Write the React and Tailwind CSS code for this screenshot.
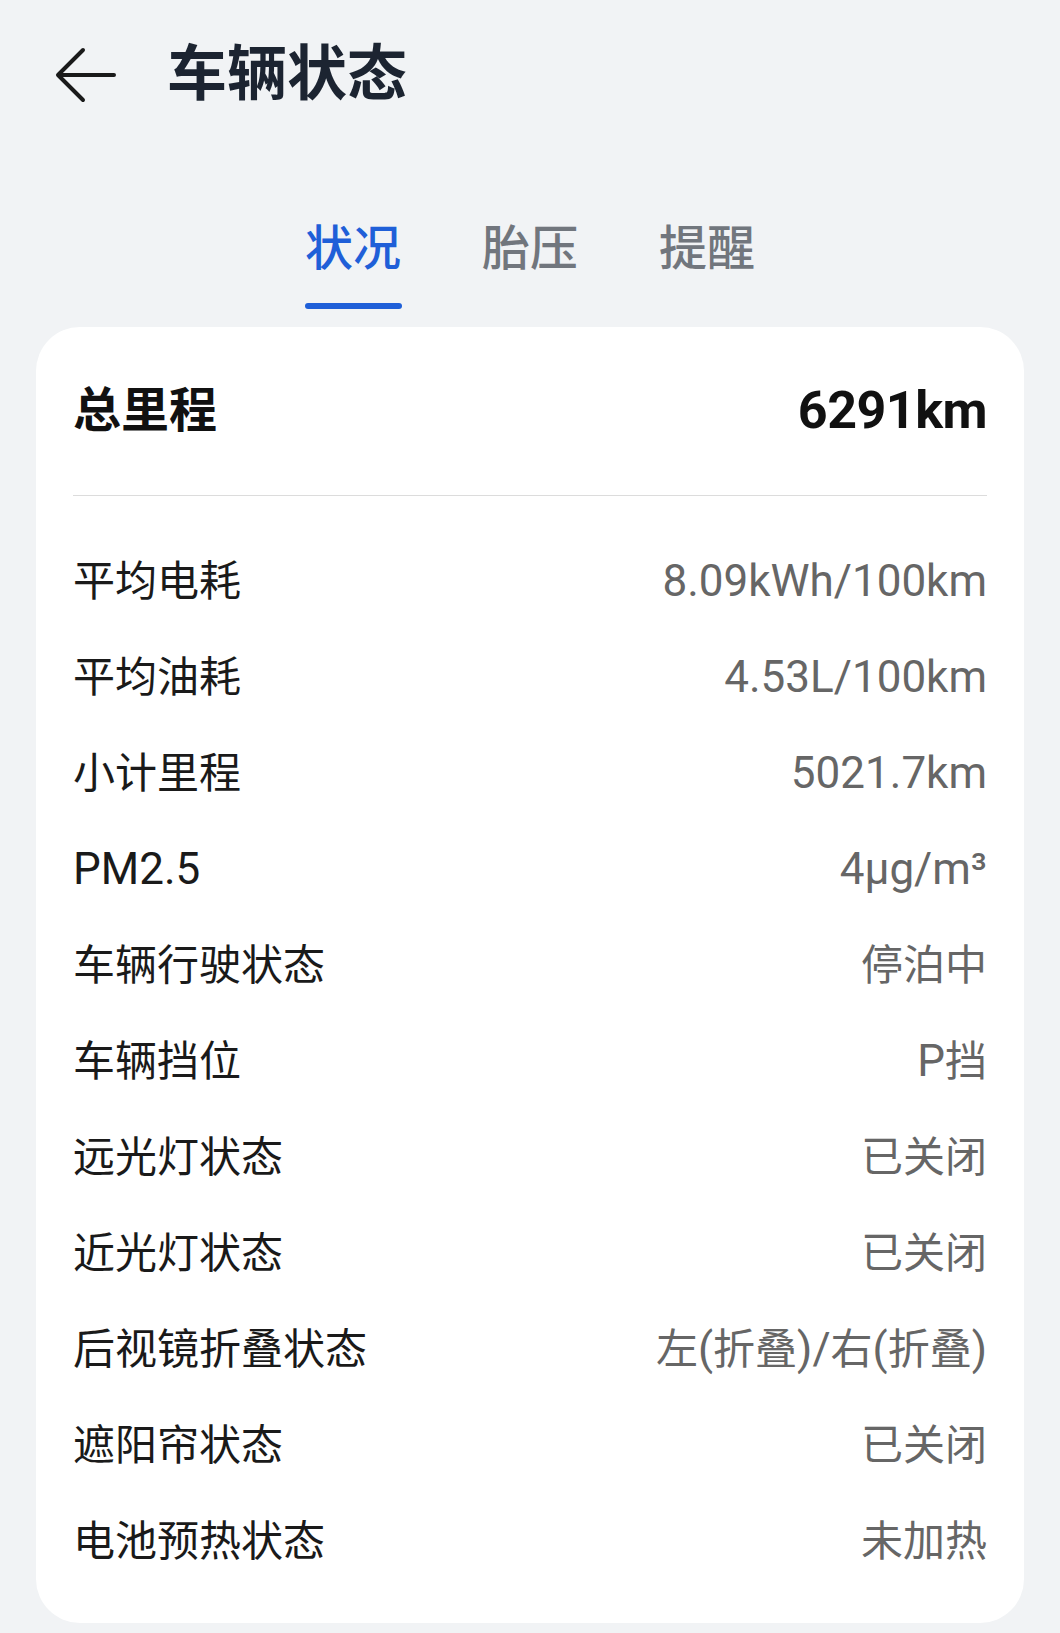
import React from "react";

const rows = [
    { label: "平均电耗", value: "8.09kWh/100km" },
    { label: "平均油耗", value: "4.53L/100km" },
    { label: "小计里程", value: "5021.7km" },
    { label: "PM2.5", value: "4µg/m³" },
    { label: "车辆行驶状态", value: "停泊中" },
    { label: "车辆挡位", value: "P挡" },
    { label: "远光灯状态", value: "已关闭" },
    { label: "近光灯状态", value: "已关闭" },
    { label: "后视镜折叠状态", value: "左(折叠)/右(折叠)" },
    { label: "遮阳帘状态", value: "已关闭" },
    { label: "电池预热状态", value: "未加热" },
];

const tabs = [
    { label: "状况", active: true },
    { label: "胎压", active: false },
    { label: "提醒", active: false },
];

// CJK glyphs run a touch smaller than the latin digits in this UI
const Mixed = ({ text }) =>
    text.split(/([\u4e00-\u9fff]+)/).map((part, i) =>
        /[\u4e00-\u9fff]/.test(part) ? (
            <span key={i} className="text-[42px]">
                {part}
            </span>
        ) : (
            <span key={i}>{part}</span>
        )
    );

const BackArrow = () => (
    <svg width="62" height="58" viewBox="0 0 62 58" fill="none">
        <path
            d="M59 29H4M28 4L3 29l25 25"
            stroke="#1a1a1a"
            strokeWidth="4"
            strokeLinecap="round"
            strokeLinejoin="round"
        />
    </svg>
);

export default function App() {
    return (
        <div className="w-[1060px] h-[1633px] bg-[#f1f3f5] font-['Roboto','Noto_Sans_CJK_SC',sans-serif] overflow-hidden">
            {/* Header */}
            <div className="h-[150px] flex items-center pl-[55px]">
                <BackArrow />
                <h1 className="ml-[50px] text-[60px] leading-none font-bold text-[#1c2431]">
                    车辆状态
                </h1>
            </div>

            {/* Tabs */}
            <div className="pt-[67px] mb-[18px] flex justify-center gap-[81px]">
                {tabs.map((tab) => (
                    <div key={tab.label} className="flex flex-col items-center w-[96px]">
                        <span
                            className={`text-[48px] leading-[64px] font-medium whitespace-nowrap ${tab.active ? "text-[#1f5fd8]" : "text-[#71767d]"
                                }`}
                        >
                            {tab.label}
                        </span>
                        <div
                            className={`mt-[22px] h-[6px] w-[97px] rounded-full ${tab.active ? "bg-[#1f5fd8]" : "bg-transparent"
                                }`}
                        />
                    </div>
                ))}
            </div>

            {/* Card */}
            <div className="mx-[36px] bg-white rounded-[44px] px-[37px] pb-[34px]">
                <div className="h-[168px] flex items-center justify-between">
                    <span className="text-[48px] font-bold text-[#111111]">总里程</span>
                    <span className="text-[52px] font-bold text-[#111111] tracking-[-0.5px]">
                        6291km
                    </span>
                </div>
                <div className="h-px bg-[#dcdcdc]" />
                <div className="pt-[37px]">
                    {rows.map((row) => (
                        <div
                            key={row.label}
                            className="h-[96px] flex items-center justify-between text-[44px]"
                        >
                            <span className="text-[#1a1a1a]">
                                <Mixed text={row.label} />
                            </span>
                            <span className="text-[#666666]">
                                <Mixed text={row.value} />
                            </span>
                        </div>
                    ))}
                </div>
            </div>
        </div>
    );
}
